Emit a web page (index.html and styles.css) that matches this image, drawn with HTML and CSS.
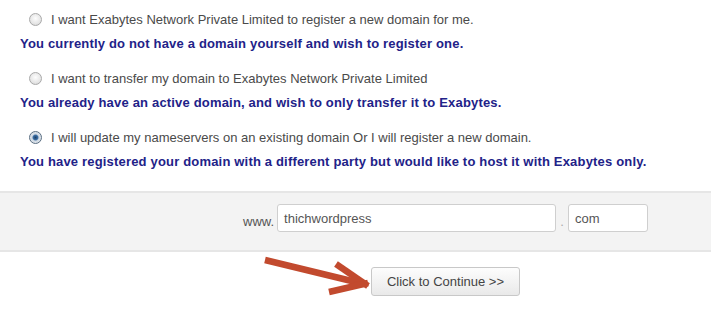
FILE: index.html
```html
<!DOCTYPE html>
<html>
<head>
<meta charset="utf-8">
<link rel="stylesheet" href="styles.css">
</head>
<body>
<div class="options">
  <div class="option">
    <label class="choice"><span class="radio"></span>I want Exabytes Network Private Limited to register a new domain for me.</label>
    <p class="note">You currently do not have a domain yourself and wish to register one.</p>
  </div>
  <div class="option">
    <label class="choice"><span class="radio"></span>I want to transfer my domain to Exabytes Network Private Limited</label>
    <p class="note">You already have an active domain, and wish to only transfer it to Exabytes.</p>
  </div>
  <div class="option">
    <label class="choice"><span class="radio checked"></span>I will update my nameservers on an existing domain Or I will register a new domain.</label>
    <p class="note">You have registered your domain with a different party but would like to host it with Exabytes only.</p>
  </div>
</div>
<div class="domain-bar">
  <span class="prefix">www.</span>
  <span class="field sld">thichwordpress</span>
  <span class="dot">.</span>
  <span class="field tld">com</span>
</div>
<div class="actions">
  <svg class="arrow" width="120" height="45" viewBox="0 0 120 45">
    <g stroke="#c24a2e" stroke-width="6.5" stroke-linecap="butt" fill="none">
      <line x1="3" y1="4" x2="102" y2="28"/>
      <line x1="74" y1="8" x2="106" y2="30"/>
      <line x1="67" y1="36" x2="106" y2="27"/>
    </g>
  </svg>
  <button class="continue">Click to Continue &gt;&gt;</button>
</div>
</body>
</html>
```
FILE: styles.css
```css
html, body {
  margin: 0;
  padding: 0;
  background: #fff;
  font-family: "Liberation Sans", Arial, sans-serif;
  font-size: 13px;
}
.options {
  padding: 9px 0 0 0;
}
.option {
  margin-bottom: 14px;
}
.choice {
  display: flex;
  align-items: center;
  height: 20px;
  padding-left: 29px;
  color: #4a4a4a;
}
.radio {
  width: 11px;
  height: 11px;
  border-radius: 50%;
  border: 1px solid #a9a9a9;
  background: radial-gradient(circle at 50% 40%, #fdfdfd 0%, #e6e6e6 60%, #cfcfcf 100%);
  margin-right: 9px;
  flex: none;
}
.radio.checked {
  border-color: #5a6e82;
  background: radial-gradient(circle, #1c3f66 0%, #3b6ea3 30%, #cfd8e2 45%, #eef2f6 100%);
}
.note {
  margin: 5px 0 0 20px;
  height: 20px;
  line-height: 20px;
  font-weight: bold;
  letter-spacing: 0.18px;
  color: #222288;
}
.domain-bar {
  margin-top: 19px;
  height: 61px;
  box-sizing: border-box;
  background: #f3f3f3;
  border-top: 2px solid #e6e6e6;
  border-bottom: 2px solid #e6e6e6;
  display: flex;
  align-items: flex-start;
  padding: 11px 0 0 243px;
  color: #555;
}
.prefix {
  margin-right: 3px;
  line-height: 28px;
  padding-top: 4px;
}
.field {
  height: 28px;
  box-sizing: border-box;
  border: 1px solid #cfcfcf;
  border-radius: 3px;
  background: #fff;
  display: flex;
  align-items: center;
  padding-left: 6px;
  color: #555;
}
.sld { width: 279px; }
.tld { width: 80px; }
.dot {
  width: 12px;
  text-align: center;
  color: #aaa;
  line-height: 28px;
  padding-top: 4px;
}
.actions {
  position: relative;
  padding: 15px 0 0 371px;
}
.arrow {
  position: absolute;
  left: 262px;
  top: 4px;
}
.continue {
  width: 149px;
  height: 29px;
  border: 1px solid #c8c8c8;
  border-radius: 3px;
  background: linear-gradient(#fdfdfd, #e9e9e9);
  font-family: "Liberation Sans", Arial, sans-serif;
  font-size: 13px;
  color: #444;
  padding: 0;
}
```
